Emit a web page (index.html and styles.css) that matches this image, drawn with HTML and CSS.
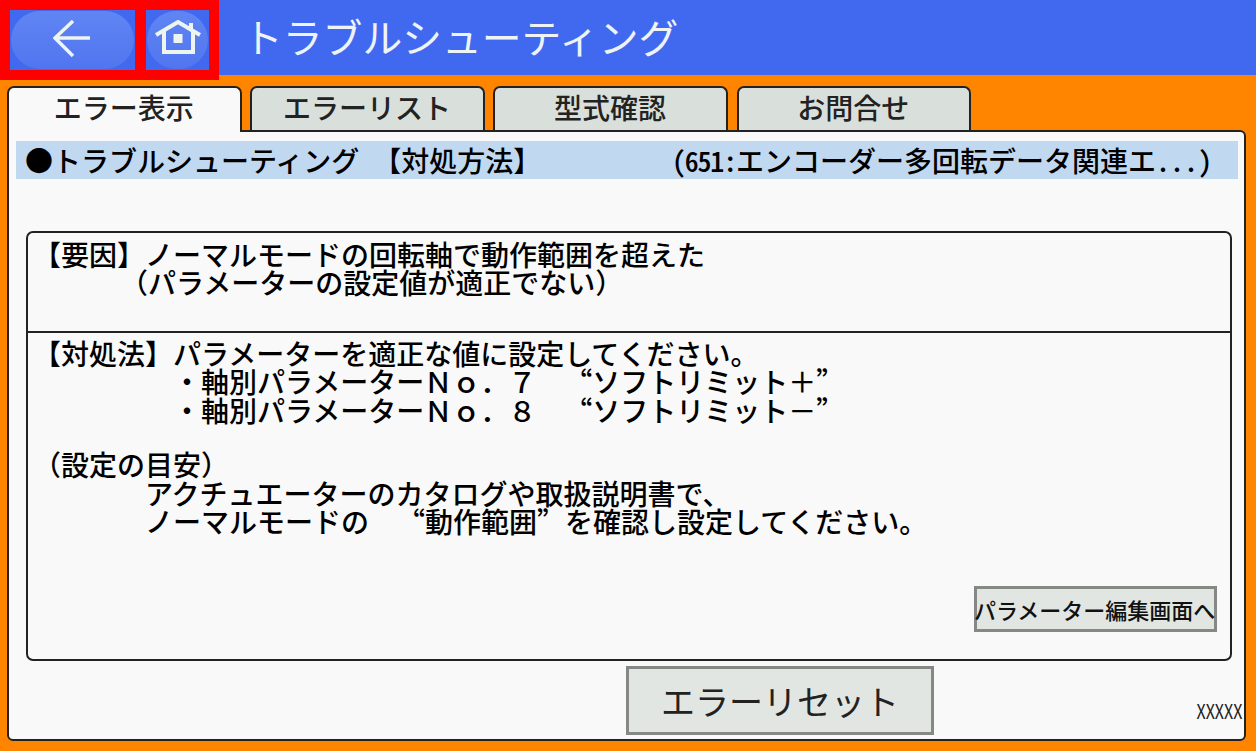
FILE: index.html
```html
<!DOCTYPE html>
<html lang="ja">
<head>
    <meta charset="UTF-8">
    <meta name="viewport" content="width=device-width, initial-scale=1.0">
    <title>トラブルシューティング</title>
    <link rel="stylesheet" href="styles.css">
</head>
<body>
    <header class="header">
        <div class="nav-box">
            <button class="nav-btn nav-back">
                <span class="pill">
                    <svg width="40" height="40" viewBox="0 0 40 40" fill="none" stroke="#eef4ee" stroke-width="3.5">
                        <path d="M20 1 L2 18 L20 36 M2 18 H37"/>
                    </svg>
                </span>
            </button>
            <button class="nav-btn nav-home">
                <span class="pill">
                    <svg width="46" height="40" viewBox="0 0 46 40" fill="none" stroke="#eef4ee" stroke-width="4">
                        <path d="M1 15 L23 2 L45 15 M9 11 V32 H38 V11 M36 3 V9"/>
                        <rect x="18.5" y="14" width="9" height="9" fill="#eef4ee" stroke="none"/>
                    </svg>
                </span>
            </button>
        </div>
        <h1 class="header-title">トラブルシューティング</h1>
    </header>

    <main class="main">
        <nav class="tabs">
            <div class="tab tab-active">エラー表示</div>
            <div class="tab">エラーリスト</div>
            <div class="tab">型式確認</div>
            <div class="tab">お問合せ</div>
        </nav>

        <section class="panel">
            <div class="title-bar">
                <span class="title-main">●トラブルシューティング　【対処方法】</span>
                <span class="title-code"><span class="half half-tight">(651:</span>エンコーダー多回転データ関連エ<span class="half">...)</span></span>
            </div>

            <div class="info-box">
                <div class="cause">
                    <p>【要因】ノーマルモードの回転軸で動作範囲を超えた</p>
                    <p class="cause-sub">　　　（パラメーターの設定値が適正でない）</p>
                </div>
                <div class="remedy">
                    <p>【対処法】パラメーターを適正な値に設定してください。</p>
                    <p>　　　　　・軸別パラメーターＮｏ．７　“ソフトリミット＋”</p>
                    <p>　　　　　・軸別パラメーターＮｏ．８　“ソフトリミット－”</p>
                    <p class="note-head">（設定の目安）</p>
                    <p>　　　　アクチュエーターのカタログや取扱説明書で、</p>
                    <p>　　　　ノーマルモードの　“動作範囲”を確認し設定してください。</p>
                    <button class="btn btn-param">パラメーター編集画面へ</button>
                </div>
            </div>

            <div class="footer">
                <button class="btn btn-reset">エラーリセット</button>
                <span class="version">XXXXX</span>
            </div>
        </section>
    </main>
</body>
</html>
```

FILE: styles.css
```css
* {
    box-sizing: border-box;
}

html, body {
    margin: 0;
    height: 751px;
    overflow: hidden;
}

body {
    font-family: "Noto Sans CJK JP", "Noto Sans", sans-serif;
    background-color: #ff8400;
    color: #000;
}

p {
    margin: 0;
    height: 28.4px;
    white-space: pre;
    font-feature-settings: "fwid";
}

button {
    font-family: inherit;
    padding: 0;
}

.header {
    display: flex;
    align-items: flex-start;
    height: 75px;
    background-color: #4169f0;
}

.nav-box {
    display: flex;
    gap: 11px;
    height: 80px;
    width: 219px;
    padding: 10px;
    background-color: #ff0000;
    position: relative;
    z-index: 1;
}

.nav-btn {
    height: 60px;
    border: none;
    background-color: #4169f0;
}

.nav-back {
    width: 125px;
}

.nav-home {
    width: 63px;
}

.pill {
    display: flex;
    align-items: center;
    justify-content: center;
    height: 58px;
    margin: 0 1px;
    border-radius: 29px;
    background: linear-gradient(#6085f3, #5175ef);
}

.header-title {
    margin: -2px 0 0 24px;
    font-size: 39.8px;
    font-weight: 400;
    line-height: 75px;
    color: #eef3f6;
}

.main {
    padding: 11px 10px 0 7px;
}

.tabs {
    display: flex;
    gap: 8.7px;
    height: 45px;
    position: relative;
    z-index: 1;
}

.tab {
    width: 234.5px;
    height: 44px;
    padding-right: 1px;
    border: 2px solid #222;
    border-bottom: none;
    border-radius: 7px 7px 0 0;
    background-color: #d9dfda;
    color: #222;
    font-size: 28px;
    font-weight: 500;
    line-height: 39px;
    text-align: center;
}

.tab-active {
    height: 46px;
    background-color: #f9f9f9;
}

.panel {
    height: 611px;
    margin-top: -1px;
    padding: 9px 6px 0 7px;
    border: 2px solid #222;
    border-radius: 0 6px 6px 6px;
    background-color: #f9f9f9;
}

.title-bar {
    display: flex;
    justify-content: space-between;
    height: 38px;
    padding: 0 26px 0 9px;
    background-color: #c0d8f0;
    font-size: 28px;
    font-weight: 500;
    line-height: 38px;
    white-space: pre;
}

.half {
    font-feature-settings: "hwid";
}

.half-tight {
    letter-spacing: -1.2px;
}

.info-box {
    height: 430px;
    margin: 52px 6px 0 10px;
    border: 2px solid #222;
    border-radius: 7px;
    font-size: 28px;
    font-weight: 500;
    line-height: 28.4px;
}

.cause {
    height: 100px;
    padding: 7px 0 0 5px;
    border-bottom: 2px solid #222;
}

.cause-sub {
    padding-left: 17px;
}

.remedy {
    padding: 6px 0 0 5px;
}

.note-head {
    margin-top: 26px;
}

.btn {
    border: 3px solid #868886;
    background-color: #e1e6e2;
    color: #111;
}

.btn-param {
    display: block;
    width: 243px;
    height: 46px;
    margin: 50.5px 13px 0 auto;
    font-size: 22px;
    font-weight: 500;
    line-height: 38px;
    text-align: left;
    text-indent: -3px;
    white-space: nowrap;
}

.footer {
    display: flex;
    align-items: flex-start;
    position: relative;
    padding: 5px 0 0 610px;
}

.btn-reset {
    width: 308px;
    height: 69px;
    font-size: 34px;
    color: #222;
}

.version {
    position: absolute;
    right: -4px;
    top: 38px;
    font-size: 20px;
    line-height: 24px;
    color: #222;
    transform: scaleX(0.8);
    transform-origin: right center;
}
```
